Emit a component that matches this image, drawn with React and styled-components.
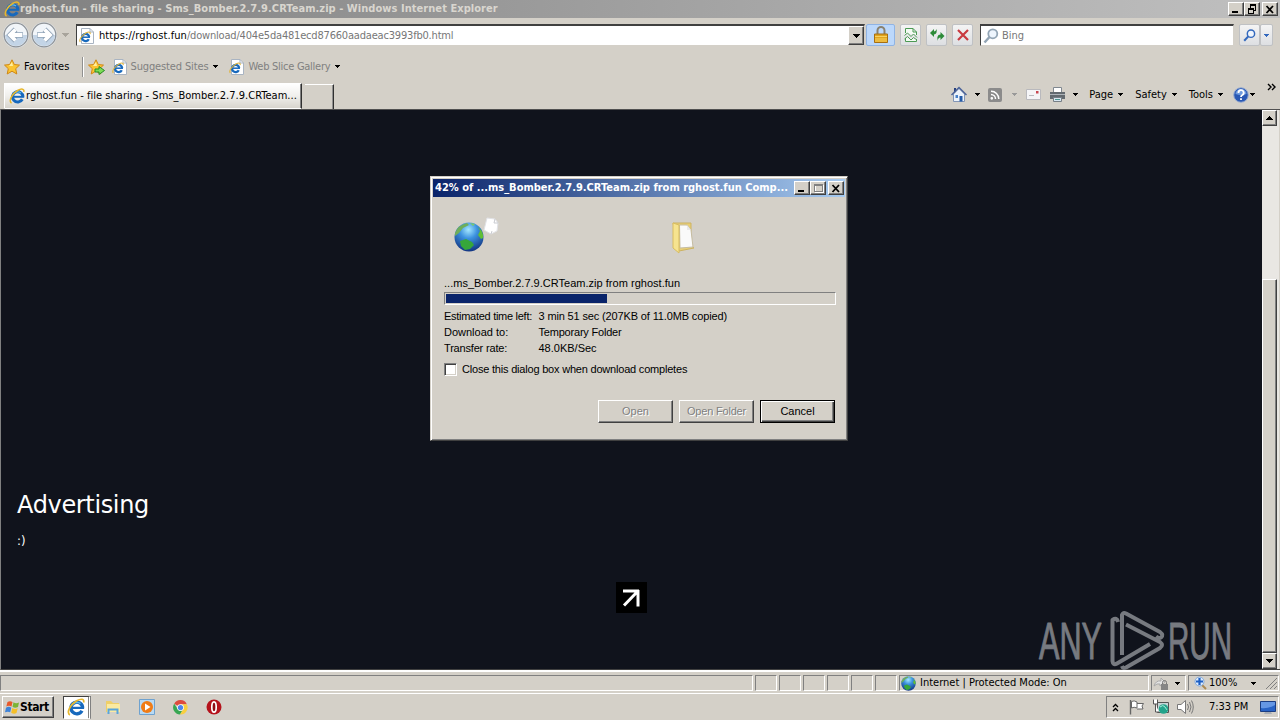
import React from "react";
import styled, {createGlobalStyle, css} from "styled-components";

const GlobalStyle = createGlobalStyle`
    * {
        box-sizing: border-box;
    }
    body {
        margin: 0;
        overflow: hidden;
        background: #d4d0c8;
        color: #000;
        font-family: "DejaVu Sans Condensed", "DejaVu Sans", sans-serif;
        font-size: 11px;
        line-height: 14px;
    }
    svg {
        display: block;
        flex: none;
    }
`;

const raised = css`
    border: 1px solid;
    border-color: #fff #404040 #404040 #fff;
    box-shadow: inset -1px -1px #808080;
    background: #d4d0c8;
`;

const sunken = css`
    border: 1px solid;
    border-color: #808080 #fff #fff #808080;
`;

const Label = styled.span`
    white-space: pre;
    letter-spacing: ${({$track}) => $track || 0}px;
    margin-left: ${({$left}) => $left || 0}px;
    color: ${({$color}) => $color || "inherit"};
`;

const Desktop = styled.div`
    position: relative;
    display: flex;
    flex-direction: column;
    width: 1280px;
    height: 720px;
    overflow: hidden;
`;

const TitleBar = styled.header`
    display: flex;
    align-items: center;
    height: 18px;
    padding: 0 2px 0 4px;
    background: linear-gradient(90deg, #808080, #c0c0c0);
    color: #d9d6cf;
    font-weight: bold;
`;

const Buttons = styled.div`
    display: flex;
    margin-left: auto;
    color: #000;
`;

const CaptionButton = styled.div`
    ${raised}
    display: flex;
    align-items: center;
    justify-content: center;
    width: 16px;
    height: 14px;
    margin-left: ${({$gap}) => $gap || 0}px;
`;

const NavRow = styled.div`
    display: flex;
    align-items: center;
    height: 34px;
    padding: 0 6px 0 2px;
`;

const Field = styled.div`
    display: flex;
    align-items: center;
    width: ${({$width}) => $width}px;
    height: 22px;
    margin-left: ${({$left}) => $left}px;
    padding-left: 2px;
    background: #fff;
    border: 1px solid;
    border-color: #404040 #d4d0c8 #d4d0c8 #404040;
    border-top-width: 2px;
`;

const DropButton = styled.div`
    ${raised}
    display: flex;
    align-items: center;
    justify-content: center;
    width: 16px;
    height: 19px;
    margin-left: auto;
`;

const ToolButton = styled.div`
    display: flex;
    align-items: center;
    justify-content: center;
    width: ${({$width}) => $width || 21}px;
    height: 22px;
    margin-left: ${({$left}) => $left ?? 5}px;
    border: 1px solid ${({$active}) => $active ? "#90b4e4" : "#bfc1c4"};
    border-radius: 2px;
    background: ${({$active}) => $active ? "#bcd8fb" : "linear-gradient(#f4f4f4, #dddfe2)"};
`;

const FavoritesRow = styled.div`
    display: flex;
    align-items: center;
    height: 29px;
    padding-left: 4px;
`;

const Separator = styled.div`
    width: 2px;
    height: 20px;
    margin-left: 12px;
    border-left: 1px solid #909090;
    border-right: 1px solid #fff;
`;

const TabRow = styled.div`
    display: flex;
    align-items: flex-end;
    height: 28px;
    padding-left: 4px;
`;

const Tab = styled.div`
    display: flex;
    align-items: center;
    width: 298px;
    height: 26px;
    padding-left: 4px;
    border: 1px solid;
    border-color: #fff #303030 transparent #fff;
    box-shadow: inset -1px 0 #808080;
    background: linear-gradient(#fff, #f0efec 50%, #d8d5ce);
`;

const NewTab = styled.div`
    width: 29px;
    height: 25px;
    margin-left: 3px;
    border-top: 1px solid #fff;
    border-right: 1px solid #303030;
    box-shadow: inset -1px 0 #909090;
`;

const Commands = styled.div`
    display: flex;
    align-items: center;
    align-self: flex-start;
    height: 27px;
    margin-left: auto;
    padding-right: 4px;
`;

const Viewport = styled.main`
    display: flex;
    height: 561px;
    border-left: 1px solid #808080;
    border-bottom: 1px solid #404040;
    border-top: 1px solid #505050;
    background: #10131c;
`;

const PageBody = styled.section`
    flex: 1;
    display: flex;
    flex-direction: column;
    padding: 377px 16px 0;
    color: #fff;
`;

const PageHeading = styled.h2`
    margin: 0;
    font-family: "DejaVu Sans", sans-serif;
    font-size: 24px;
    font-weight: normal;
    line-height: 36px;
    letter-spacing: -0.35px;
`;

const PageText = styled.p`
    margin: 10px 0 33px;
    font-size: 13px;
    line-height: 16px;
`;

const OpenArrow = styled.div`
    display: flex;
    align-items: center;
    justify-content: center;
    align-self: center;
    width: 31px;
    height: 31px;
    background: #000;
`;

const ScrollBar = styled.div`
    display: flex;
    flex-direction: column;
    width: 18px;
    padding-right: 2px;
    background: #e9e7e3;
    border-right: 1px solid #d4d0c8;
`;

const ScrollButton = styled.div`
    ${raised}
    display: flex;
    align-items: center;
    justify-content: center;
    height: 16px;
`;

const ScrollTrack = styled.div`
    flex: 1;
    display: flex;
    align-items: flex-end;
`;

const ScrollThumb = styled.div`
    ${raised}
    width: 100%;
    height: 374px;
`;

const StatusBar = styled.footer`
    display: flex;
    gap: 2px;
    height: 24px;
    padding: 3px 0 2px;
    border-top: 2px solid #fff;
    border-bottom: 1px solid #fff;
`;

const StatusPane = styled.div`
    ${sunken}
    display: flex;
    align-items: center;
    width: ${({$width}) => $width}px;
    padding-left: 1px;
`;

const TaskBar = styled.nav`
    display: flex;
    align-items: center;
    height: 26px;
    padding-left: 2px;
`;

const StartButton = styled.div`
    ${raised}
    display: flex;
    align-items: center;
    width: 52px;
    height: 22px;
    padding-left: 2px;
    font-weight: bold;
    font-size: 12px;
`;

const TaskButton = styled.div`
    display: flex;
    align-items: center;
    justify-content: center;
    width: 28px;
    height: 23px;
    margin: 0 14px 0 9px;
    border: 1px solid;
    border-color: #404040 #fff #fff #404040;
    background: #fff;
    border-right: 3px double #808080;
`;

const QuickLaunch = styled.div`
    display: flex;
    align-items: center;
    gap: 18px;
`;

const Tray = styled.div`
    ${sunken}
    display: flex;
    align-items: center;
    width: 173px;
    height: 22px;
    margin: 0 1px 0 auto;
    padding-left: 5px;
`;

const Dialog = styled.div`
    position: absolute;
    left: 430px;
    top: 176px;
    width: 418px;
    height: 265px;
    padding: 1px;
    border: 1px solid;
    border-color: #d4d0c8 #404040 #404040 #d4d0c8;
    box-shadow: inset 1px 1px #fff, inset -1px -1px #808080;
    background: #d4d0c8;
    font-family: "Liberation Sans", Arial, sans-serif;
`;

const DialogTitle = styled.div`
    display: flex;
    align-items: center;
    height: 18px;
    margin: 1px;
    padding: 0 1px 0 2px;
    background: linear-gradient(90deg, #0a246a, #a6caf0);
    color: #fff;
    font-family: "DejaVu Sans Condensed", "DejaVu Sans", sans-serif;
    font-weight: bold;
`;

const DialogBody = styled.div`
    padding: 20px 10px 0 12px;
`;

const Animation = styled.div`
    display: flex;
    height: 58px;
    padding-left: 10px;
`;

const GlobeSlot = styled.div`
    padding-top: 4px;
`;

const FolderSlot = styled.div`
    margin: 4px 0 0 172px;
`;

const Progress = styled.div`
    ${sunken}
    height: 13px;
    margin-top: 2px;
    padding: 1px;
`;

const ProgressFill = styled.div`
    height: 9px;
    background: #0a246a;
`;

const Details = styled.dl`
    display: grid;
    grid-template-columns: 94.5px 1fr;
    margin: 3px 0 0;
    line-height: 16px;
    white-space: pre;
`;

const Name = styled.dt`
    letter-spacing: ${({$track}) => $track || 0}px;
`;

const Value = styled.dd`
    margin: 0;
    letter-spacing: ${({$track}) => $track || 0}px;
`;

const CheckRow = styled.div`
    display: flex;
    align-items: center;
    margin-top: 6px;
`;

const CheckBox = styled.div`
    width: 13px;
    height: 13px;
    border: 1px solid;
    border-color: #808080 #fff #fff #808080;
    box-shadow: inset 1px 1px #404040, inset -1px -1px #d4d0c8;
    background: #fff;
`;

const Actions = styled.div`
    display: flex;
    justify-content: flex-end;
    gap: 6px;
    margin-top: 24px;
    padding-right: 1px;
`;

const Button = styled.button`
    ${raised}
    width: 75px;
    height: 23px;
    padding: 0 0 2px;
    font: inherit;
    color: #000;
    letter-spacing: ${({$track}) => $track || 0}px;
    &:disabled {
        color: #808080;
        text-shadow: 1px 1px #fff;
    }
    ${({$primary}) => $primary && css`
        border-color: #000;
        box-shadow: inset 1px 1px #fff, inset -1px -1px #404040, inset -2px -2px #808080;
    `}
`;

const Watermark = styled.svg`
    position: absolute;
    left: 1036px;
    top: 606px;
    overflow: visible;
`;

const Caret = ({up, color = "#000", size = 5, left = 0}) => (
    <svg
        width={size}
        height={size > 5 ? 4 : 3}
        viewBox="0 0 6 3"
        preserveAspectRatio="none"
        style={{marginLeft: left}}
        shapeRendering="crispEdges"
    >
        <path d={up ? "M0 3L3 0L6 3z" : "M0 0H6L3 3z"} fill={color} />
    </svg>
);

const MinimizeIcon = () => (
    <svg width="10" height="9"><path d="M1 7H7" stroke="#000" strokeWidth="2" /></svg>
);

const MaximizeIcon = () => (
    <svg width="11" height="10" fill="none" shapeRendering="crispEdges">
        <path d="M2.5 2.5H10.5V9.5H2.5z" stroke="#fff" />
        <path d="M1.5 1.5H9.5V8.5H1.5zM1 2.5H10" stroke="#808080" />
    </svg>
);

const RestoreIcon = () => (
    <svg width="10" height="10" fill="none" stroke="#000" shapeRendering="crispEdges">
        <path d="M3.5 4V.5H8.5V6.5H6M3 1.5H9M1.5 4.5H6.5V9.5H1.5zM1 5.5H7" />
    </svg>
);

const CloseIcon = () => (
    <svg width="10" height="9"><path d="M1.5 1L8 8M8 1L1.5 8" stroke="#000" strokeWidth="1.8" /></svg>
);

const ExplorerMark = ({size = 16}) => (
    <svg width={size} height={size} viewBox="0 0 16 16" fill="none">
        <path d="M13.3 11.3A5.2 5.2 0 1 1 13.9 8.6" stroke="#1769bd" strokeWidth="3" />
        <path d="M4.5 8.8H15.2" stroke="#1769bd" strokeWidth="2" />
        <path d="M4 6.8A5.2 5.2 0 0 1 12 5" stroke="#5cbcf0" strokeWidth="1.3" />
        <path d="M2.6 15C-.8 13.5 2.6 6 8.6 2.5C12.5 .3 15.6 .6 14.8 4" stroke="#e7b72c" strokeWidth="1.5" />
    </svg>
);

const PageIcon = ({size = 16}) => (
    <svg width={size} height={size} viewBox="0 0 16 16" fill="none">
        <path d="M2.5 .5H11L14.5 4V15.5H2.5z" fill="#fff" stroke="#a9b4c2" />
        <path d="M11 .5V4H14.5" stroke="#a9b4c2" />
        <path d="M9.8 11.2A3.6 3.6 0 1 1 10.2 9" stroke="#1769bd" strokeWidth="2.3" />
        <path d="M4 9.2H11" stroke="#1769bd" strokeWidth="1.5" />
        <path d="M1.3 13.8C-.5 12 3 7 7.4 4.7C10 3.5 11.8 4 11 6" stroke="#e0b43a" strokeWidth="1.1" />
    </svg>
);

const NavCircle = ({forward}) => (
    <svg width="28" height="28" viewBox="0 0 28 28" fill="none">
        <circle cx="14" cy="14" r="13" fill="#dfe2e5" />
        <circle cx="14" cy="14" r="11.8" fill="#f1f5f9" stroke="#8d9297" strokeWidth="1.3" />
        <path d="M3 14A11 11 0 0 0 25 14z" fill="#c3d4e6" />
        <g transform={forward ? "translate(28 0) scale(-1 1)" : undefined}>
            <path d="M21 14H8M13.5 8.5L8 14L13.5 19.5" stroke="#8fa2b6" strokeWidth="5.4" />
            <path d="M20.4 14H8M13.5 8.5L8 14L13.5 19.5" stroke="#fff" strokeWidth="3.8" />
        </g>
    </svg>
);

const LockIcon = () => (
    <svg width="16" height="18" viewBox="0 0 16 18" fill="none">
        <path d="M4.5 9V4.5A3.5 3.5 0 0 1 11.5 4.5V9" stroke="#8a8270" strokeWidth="2" />
        <path d="M1.5 8H14.5V16.5H1.5z" fill="#e2a51d" stroke="#a66f12" />
        <path d="M2 10.5H14M2 13H14M2 15H14" stroke="#f7d265" />
    </svg>
);

const BrokenPageIcon = () => (
    <svg width="14" height="16" fill="none" stroke="#4c9a55">
        <path d="M1.5 6V1.5H9L12.5 5V8M1.5 11V14.5H12.5V12" fill="#f4fbf4" />
        <path d="M9 1.5V5H12.5M.5 8.5L3.5 6L7 9.5L9.5 7L13 10.5M.5 12L3.5 9.5L7 13L9.5 10.5L13 13" />
    </svg>
);

const RefreshIcon = () => (
    <svg width="16" height="14" fill="#2d8b38">
        <path d="M1 5L5 1V3.6Q7 3.4 7.6 1Q8.4 6.2 5 6.4V9z" />
        <path d="M15.5 8L11.5 4V6.6Q9 6.6 8.4 9V13Q9 9.6 11.5 9.4V12z" />
    </svg>
);

const StopIcon = () => (
    <svg width="14" height="14"><path d="M2 2L12 12M12 2L2 12" stroke="#c93a40" strokeWidth="2.2" /></svg>
);

const SearchIcon = ({color, size = 16}) => (
    <svg width={size} height={size} viewBox="0 0 16 16" fill="none" stroke={color}>
        <circle cx="9.8" cy="5.8" r="4.5" fill="#eef5fd" strokeWidth="1.8" />
        <path d="M6.5 9L1.5 14.5" strokeWidth="2.5" />
    </svg>
);

const Star = ({add}) => (
    <svg width="17" height="16" viewBox="0 0 17 16">
        <path d="M8 .8L10.3 5.5L15.5 6.1L11.7 9.7L12.8 15L8 12.2L3.2 15L4.3 9.7L.5 6.1L5.7 5.5z" fill="#fbc432" stroke="#cf8817" />
        <path d="M8 3L9 7L5 7z" fill="#fff0a0" />
        {add && <path d="M7 10H11V7.5L16.5 11.5L11 15.5V13H7z" fill="#7ddc55" stroke="#258c25" />}
    </svg>
);

const HomeIcon = () => (
    <svg width="16" height="17" viewBox="0 0 16 17">
        <path d="M3 2H5V7H3z" fill="#28417e" />
        <path d="M2.5 8L8 2.5L13.5 8V15.5H2.5z" fill="#edf3fb" stroke="#8295b5" />
        <path d="M.5 9L8 1.5L15.5 9" fill="none" stroke="#4a6298" strokeWidth="1.5" />
        <path d="M8.5 10H11.5V15.5H8.5z" fill="#245ba8" />
        <path d="M4.5 9H7V12H4.5z" fill="#4a82c8" />
    </svg>
);

const FeedIcon = () => (
    <svg width="14" height="14" fill="none" stroke="#fff" strokeWidth="1.5">
        <rect width="14" height="14" rx="2" fill="#8b8b8b" stroke="none" />
        <path d="M3 6.5A4.5 4.5 0 0 1 7.5 11M3 3.3A7.7 7.7 0 0 1 10.8 11" />
        <circle cx="3.8" cy="10.3" r=".6" />
    </svg>
);

const MailIcon = () => (
    <svg width="15" height="11">
        <path d="M.5 .5H14.5V10.5H.5z" fill="#f5f5f7" stroke="#b9b9bd" />
        <path d="M10 2H12.5V4.5H10z" fill="#c84650" />
        <path d="M3 6.5H8" stroke="#b9b9bd" />
    </svg>
);

const PrinterIcon = () => (
    <svg width="17" height="16">
        <path d="M4.5 .5H12.5V6H4.5z" fill="#fff" stroke="#808890" />
        <path d="M1 5H16V12H1z" fill="#636a70" />
        <path d="M1 7.5H16" stroke="#aeb4b9" />
        <path d="M4.5 10.5H12.5V14.5H4.5z" fill="#d7e6f1" stroke="#777f86" />
        <path d="M6 12.5H11" stroke="#4c9690" />
    </svg>
);

const HelpIcon = () => (
    <svg width="16" height="16" fill="none">
        <circle cx="8" cy="8" r="7.3" fill="#2958b4" stroke="#9caed0" />
        <path d="M2.5 7A5.5 5 0 0 1 13.5 7Q8 9 2.5 7" fill="#6f9bdf" />
        <path d="M5.5 6A2.6 2.6 0 1 1 9.4 8Q8 8.5 8 10M8 11.3V13" stroke="#fff" strokeWidth="1.8" />
    </svg>
);

const Overflow = styled.svg`
    align-self: flex-start;
    margin: 2px 0 0 12px;
`;

const Globe = ({size}) => (
    <svg width={size} height={size} viewBox="0 0 30 30">
        <defs>
            <radialGradient id="sea" cx="48%" cy="25%" r="75%">
                <stop offset="0" stopColor="#a5e8ff" />
                <stop offset=".4" stopColor="#3c92df" />
                <stop offset="1" stopColor="#123582" />
            </radialGradient>
        </defs>
        <circle cx="15" cy="15" r="14.5" fill="url(#sea)" />
        <path d="M1 11Q4 3 13 1L15 3L9 6L5 11L1 14z" fill="#6fae5a" />
        <path d="M24 5Q30 10 29 16L27 17L24 13L26 9z" fill="#5fbe35" />
        <path d="M6 19L12 17L18 20L20 23L16 27L11 28L7 24z" fill="#36a63b" />
        <path d="M16 1L21 2L19 4z" fill="#7bca67" />
    </svg>
);

const Paper = styled.svg`
    margin: -1px 0 0 -1px;
`;

const FlyingPage = () => (
    <Paper width="17" height="19">
        <path d="M4 1L12 2L15 6L14 14L8 17L1 13z" fill="#fff" stroke="#e1e2e6" />
        <path d="M12 2L11 6L15 6M8 17L9 14" fill="none" stroke="#c9cbd0" />
    </Paper>
);

const FolderIcon = () => (
    <svg width="24" height="32" viewBox="0 0 24 32">
        <path d="M1 1H19V24L22 26L7 29z" fill="#e9cf76" stroke="#cdb362" />
        <path d="M7.5 3H15L19 8L21 25L8 26z" fill="#fafafa" stroke="#c5bca2" />
        <path d="M15 3L15 8L19 8" fill="#e9e9e9" />
        <path d="M1 1L7 3V31L1 26z" fill="#f6e38f" stroke="#d9bd60" />
    </svg>
);

const WindowsLogo = () => (
    <svg width="15" height="15" viewBox="0 0 15 15">
        <path d="M2.5 2Q5 .5 7.5 2L6.5 6.5Q4 5 1.3 6.5z" fill="#e8592b" />
        <path d="M8.5 2.3Q11 4 14 2.5L13 7Q10 8.5 7.5 6.8z" fill="#7cb436" />
        <path d="M1 7.7Q4 6 6.3 7.7L5.2 12.3Q3 11 0 12.3z" fill="#3e83d8" />
        <path d="M7.3 8Q10 9.8 12.7 8.3L11.5 13Q9 14.5 6.2 12.7z" fill="#f5bf27" />
    </svg>
);

const ExplorerFolder = () => (
    <svg width="16" height="16">
        <path d="M1 2H6L8 4H14V13H1z" fill="#efcf68" />
        <path d="M2 5H15V13H2z" fill="#fbeaa1" />
        <path d="M3.5 15V10.5H12.5V15" fill="none" stroke="#5aa5d9" strokeWidth="2" />
    </svg>
);

const PlayerIcon = () => (
    <svg width="16" height="16">
        <path d="M.5 .5H15.5V15.5H.5z" fill="#b8daf4" stroke="#6fa2cf" />
        <circle cx="8" cy="8" r="6" fill="#f07c16" />
        <path d="M6 4.5L11.5 8L6 11.5z" fill="#fff" />
    </svg>
);

const ChromeIcon = () => (
    <svg width="15" height="15" viewBox="0 0 16 16">
        <path d="M8 8L1.3 4A7.5 7.5 0 0 1 14.7 4.5L8 4.5z" fill="#dd4b3e" />
        <path d="M1.3 4A7.5 7.5 0 0 0 7.5 15.5L11 9.5L5 9.5z" fill="#38a652" />
        <path d="M14.7 4.5A7.5 7.5 0 0 1 7.5 15.5L11.3 9L9 4.5z" fill="#f8cf3f" />
        <circle cx="8" cy="8" r="3.6" fill="#fff" />
        <circle cx="8" cy="8" r="2.8" fill="#4d86ec" />
    </svg>
);

const OperaIcon = () => (
    <svg width="16" height="16">
        <circle cx="8" cy="8" r="7.5" fill="#b5121b" />
        <ellipse cx="8" cy="8" rx="2.2" ry="5.2" fill="#8e0d14" stroke="#fff" strokeWidth="1.7" />
    </svg>
);

const ProtectedIcon = () => (
    <svg width="17" height="15" fill="none">
        <path d="M1 10Q3 4 8 5V2L12 6L7 10V8Q4 7 1 10" fill="#e4e4e4" stroke="#a9a9a9" />
        <path d="M9.5 8V6.5A2 2 0 0 1 13.5 6.5V8" stroke="#777" />
        <path d="M8 8H15V14H8z" fill="#858585" />
    </svg>
);

const ZoomIcon = () => (
    <svg width="13" height="14" fill="none">
        <path d="M8 9L12 13" stroke="#ad8a52" strokeWidth="2" />
        <circle cx="5.5" cy="5.5" r="4.5" fill="#dceafb" stroke="#82a8da" />
        <path d="M5.5 2V9M2 5.5H9" stroke="#1d5fc4" strokeWidth="2.2" />
    </svg>
);

const Grip = styled.svg`
    align-self: flex-end;
    margin-left: auto;
`;

const FlagIcon = () => (
    <svg width="16" height="16" fill="none" stroke="#666">
        <path d="M1.5 1V15.5" strokeWidth="1.4" />
        <path d="M2.5 2.5Q5 1 8 3V9Q5 7.5 2.5 9zM8 4.5H14.5L13 7L14 10H8" fill="#fff" />
    </svg>
);

const NetworkIcon = () => (
    <svg width="17" height="16" fill="none">
        <path d="M4.5 3.5H15.5V13.5H4.5z" fill="#c5d5d6" stroke="#555" />
        <path d="M.5 .5V5H4.5V.5M2.5 5V13H6" stroke="#555" fill="#fff" />
        <circle cx="10.5" cy="10" r="4.8" fill="#22a48b" />
        <path d="M7 8Q10 5 12 8T14 11" stroke="#a9eddc" />
    </svg>
);

const VolumeIcon = () => (
    <svg width="17" height="16" fill="none" stroke="#777">
        <path d="M.5 5.5H4L8.5 1.5V14.5L4 10.5H.5z" fill="#fff" />
        <path d="M10.5 5Q12.5 8 10.5 11M12.5 3Q15.5 8 12.5 13M14.5 1.5Q18 8 14.5 14.5" />
    </svg>
);

const ScreenIcon = () => (
    <svg width="16" height="15">
        <path d="M.5 1.5H15.5V11.5H.5z" fill="#2863c5" stroke="#1b3d82" />
        <path d="M1 2H15V5Q8 9 1 8z" fill="#6597e4" />
        <path d="M5 12H11L12 14H4z" fill="#a8adb5" />
    </svg>
);

const details = [
    {name: "Estimated time left:", value: "3 min 51 sec (207KB of 11.0MB copied)", tracks: [-0.28, -0.14]},
    {name: "Download to:", value: "Temporary Folder", tracks: [0, -0.2]},
    {name: "Transfer rate:", value: "48.0KB/Sec", tracks: [-0.18, 0]},
];

const DownloadDialog = ({percent}) => (
    <Dialog role="dialog">
        <DialogTitle>
            <Label>{percent}% of ...ms_Bomber.2.7.9.CRTeam.zip from rghost.fun Comp...</Label>
            <Buttons>
                <CaptionButton><MinimizeIcon /></CaptionButton>
                <CaptionButton><MaximizeIcon /></CaptionButton>
                <CaptionButton $gap={2}><CloseIcon /></CaptionButton>
            </Buttons>
        </DialogTitle>
        <DialogBody>
            <Animation>
                <GlobeSlot><Globe size={30} /></GlobeSlot>
                <FlyingPage />
                <FolderSlot><FolderIcon /></FolderSlot>
            </Animation>
            <Label $track={0.02}>...ms_Bomber.2.7.9.CRTeam.zip from rghost.fun</Label>
            <Progress>
                <ProgressFill style={{width: `${percent - 0.4}%`}} />
            </Progress>
            <Details>
                {details.map(({name, value, tracks}) => (
                    <React.Fragment key={name}>
                        <Name $track={tracks[0]}>{name}</Name>
                        <Value $track={tracks[1]}>{value}</Value>
                    </React.Fragment>
                ))}
            </Details>
            <CheckRow>
                <CheckBox />
                <Label $left={5} $track={-0.2}>Close this dialog box when download completes</Label>
            </CheckRow>
            <Actions>
                <Button disabled>Open</Button>
                <Button disabled $track={-0.2}>Open Folder</Button>
                <Button $primary>Cancel</Button>
            </Actions>
        </DialogBody>
    </Dialog>
);

const App = () => (
    <Desktop>
        <GlobalStyle />
        <TitleBar>
            <ExplorerMark size={16} />
            <Label $track={0.05}>rghost.fun - file sharing - Sms_Bomber.2.7.9.CRTeam.zip - Windows Internet Explorer</Label>
            <Buttons>
                <CaptionButton><MinimizeIcon /></CaptionButton>
                <CaptionButton><RestoreIcon /></CaptionButton>
                <CaptionButton $gap={2}><CloseIcon /></CaptionButton>
            </Buttons>
        </TitleBar>
        <NavRow>
            <NavCircle />
            <NavCircle forward />
            <Caret color="#a8a49c" size={7} left={4} />
            <Field $width={789} $left={7}>
                <PageIcon />
                <Label $left={4} $track={0.1}>https://rghost.fun</Label>
                <Label $color="#777" $track={-0.19}>/download/404e5da481ecd87660aadaeac3993fb0.html</Label>
                <DropButton><Caret size={7} /></DropButton>
            </Field>
            <ToolButton $active $width={29} $left={1}><LockIcon /></ToolButton>
            <ToolButton><BrokenPageIcon /></ToolButton>
            <ToolButton><RefreshIcon /></ToolButton>
            <ToolButton><StopIcon /></ToolButton>
            <Field $width={254} $left={7}>
                <SearchIcon color="#93a5b5" />
                <Label $left={3} $color="#777">Bing</Label>
            </Field>
            <ToolButton><SearchIcon color="#3268bd" size={13} /></ToolButton>
            <ToolButton $width={13} $left={0}><Caret color="#3268bd" /></ToolButton>
        </NavRow>
        <FavoritesRow>
            <Star />
            <Label $left={3} $track={0.1}>Favorites</Label>
            <Separator />
            <Label $left={4}><Star add /></Label>
            <Label $left={7}><PageIcon /></Label>
            <Label $left={3} $color="#808080" $track={-0.13}>Suggested Sites</Label>
            <Caret left={5} />
            <Label $left={11}><PageIcon /></Label>
            <Label $left={3} $color="#808080" $track={-0.27}>Web Slice Gallery</Label>
            <Caret left={5} />
        </FavoritesRow>
        <TabRow>
            <Tab>
                <ExplorerMark size={16} />
                <Label $left={1} $track={0.03}>rghost.fun - file sharing - Sms_Bomber.2.7.9.CRTeam...</Label>
            </Tab>
            <NewTab />
            <Commands>
                <HomeIcon />
                <Caret left={8} />
                <Label $left={8}><FeedIcon /></Label>
                <Caret left={10} color="#999" />
                <Label $left={9}><MailIcon /></Label>
                <Label $left={8}><PrinterIcon /></Label>
                <Caret left={7} />
                <Label $left={11}>Page</Label>
                <Caret left={5} />
                <Label $left={12}>Safety</Label>
                <Caret left={5} />
                <Label $left={12}>Tools</Label>
                <Caret left={5} />
                <Label $left={10}><HelpIcon /></Label>
                <Caret left={1} />
                <Overflow width="9" height="9" fill="none" stroke="#000" strokeWidth="1.4">
                    <path d="M1 1L4 4L1 7M5 1L8 4L5 7" />
                </Overflow>
            </Commands>
        </TabRow>
        <Viewport>
            <PageBody>
                <PageHeading>Advertising</PageHeading>
                <PageText>:)</PageText>
                <OpenArrow>
                    <svg width="19" height="18" fill="none" stroke="#fff" strokeWidth="3">
                        <path d="M1 2H17M16 1V17.5M15.5 2.5L2 16.5" />
                    </svg>
                </OpenArrow>
            </PageBody>
            <ScrollBar>
                <ScrollButton><Caret up size={7} /></ScrollButton>
                <ScrollTrack><ScrollThumb /></ScrollTrack>
                <ScrollButton><Caret size={7} /></ScrollButton>
            </ScrollBar>
        </Viewport>
        <StatusBar>
            <StatusPane $width={753} />
            {[...Array(6)].map((_, i) => <StatusPane key={i} $width={22} />)}
            <StatusPane $width={250}>
                <Globe size={15} />
                <Label $left={4}>Internet | Protected Mode: On</Label>
            </StatusPane>
            <StatusPane $width={35}>
                <ProtectedIcon />
                <Caret left={5} />
            </StatusPane>
            <StatusPane $width={91}>
                <Label $left={4}><ZoomIcon /></Label>
                <Label $left={2}>100%</Label>
                <Caret left={14} />
                <Grip width="12" height="13" stroke="#808080">
                    <path d="M0 12L11 1M4 12L11 5M8 12L11 9" />
                </Grip>
            </StatusPane>
        </StatusBar>
        <TaskBar>
            <StartButton>
                <WindowsLogo />
                <Label $track={-0.4}>Start</Label>
            </StartButton>
            <TaskButton><ExplorerMark size={18} /></TaskButton>
            <QuickLaunch>
                <ExplorerFolder />
                <PlayerIcon />
                <ChromeIcon />
                <OperaIcon />
            </QuickLaunch>
            <Tray>
                <svg width="7" height="9" fill="none" stroke="#000" strokeWidth="1.3">
                    <path d="M1 4L3.5 1.5L6 4M1 8L3.5 5.5L6 8" />
                </svg>
                <Label $left={10}><FlagIcon /></Label>
                <Label $left={8}><NetworkIcon /></Label>
                <Label $left={7}><VolumeIcon /></Label>
                <Label $left={15} $track={-0.1}>7:33 PM</Label>
                <Label $left={12}><ScreenIcon /></Label>
            </Tray>
        </TaskBar>
        <Watermark width="200" height="64" fill="none" stroke="#777a80" strokeWidth="4" strokeLinejoin="round">
            <g fill="#777a80" strokeWidth="1" fontFamily="Liberation Sans, Arial, sans-serif" fontSize="51">
                <text x="3" y="53" textLength="63" lengthAdjust="spacingAndGlyphs">ANY</text>
                <text x="132" y="53" textLength="64" lengthAdjust="spacingAndGlyphs">RUN</text>
            </g>
            <path d="M82 16Q81 11 76.500 14V55Q77 60 81 57.500L114 38" />
            <path d="M86 49V9Q87 6 90 7.500L124 26Q128 29 125 31.500Q123 33 120 30.500" />
            <path d="M90 18.500L124 36Q128 39 124 42L90 61.500Q87 63 86 60" />
        </Watermark>
        <DownloadDialog percent={42} />
    </Desktop>
);

export default App;
